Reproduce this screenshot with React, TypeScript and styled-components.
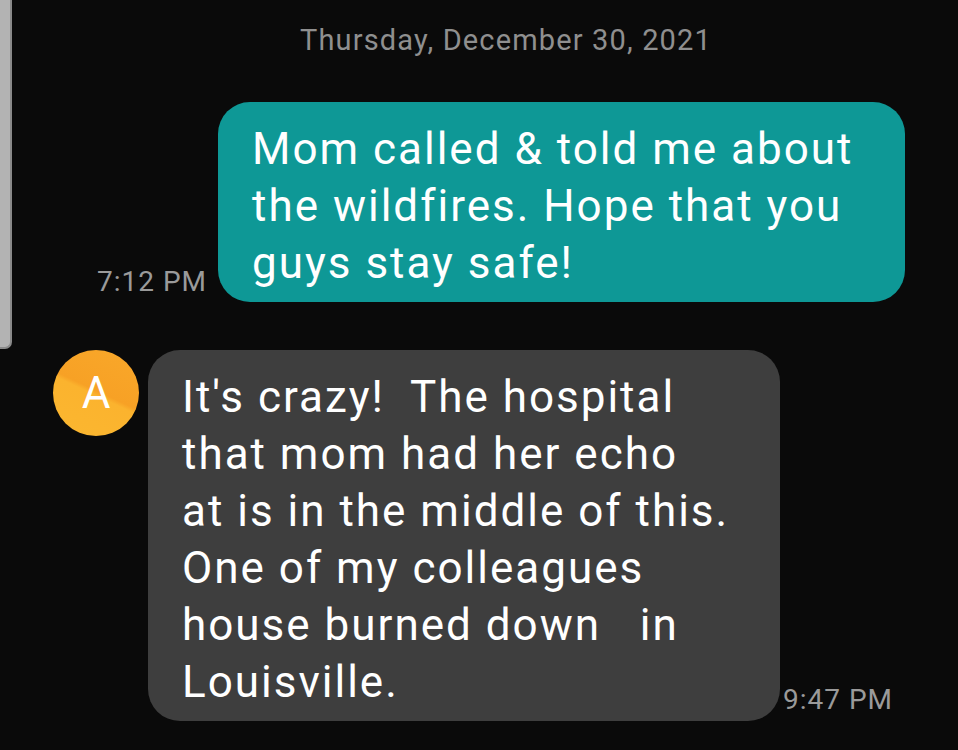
import styled, { createGlobalStyle } from "styled-components";

const GlobalStyle = createGlobalStyle`
  html, body {
    margin: 0;
    padding: 0;
    background: #0a0a0a;
  }
  * {
    box-sizing: border-box;
  }
`;

const App = () => {
  return (
    <Screen>
      <GlobalStyle />
      <ScrollThumb />
      <DateHeader>Thursday, December 30, 2021</DateHeader>

      <OutgoingRow>
        <Time $gap={11} $bottom={6}>
          7:12 PM
        </Time>
        <Bubble $color="#0e9896" $width={687}>
          Mom called &amp; told me about
          <br />
          the wildfires. Hope that you
          <br />
          guys stay safe!
        </Bubble>
      </OutgoingRow>

      <IncomingRow>
        <Avatar>A</Avatar>
        <Bubble $color="#3e3e3e" $width={632}>
          {"It's crazy!  The hospital"}
          <br />
          that mom had her echo
          <br />
          at is in the middle of this.
          <br />
          One of my colleagues
          <br />
          {"house burned down   in"}
          <br />
          Louisville.
        </Bubble>
        <Time $gap={3} $bottom={7}>
          9:47 PM
        </Time>
      </IncomingRow>
    </Screen>
  );
};

export default App;

const Screen = styled.div`
  position: relative;
  display: flex;
  flex-direction: column;

  width: 958px;
  height: 750px;
  overflow: hidden;

  background: #0a0a0a;
  font-family: Roboto, "Liberation Sans", sans-serif;
`;

const ScrollThumb = styled.div`
  position: absolute;
  top: 0;
  left: 0;

  width: 12px;
  height: 349px;

  background: #b3b3b3;
  border-right: 2px solid #8a8a8a;
  border-bottom: 2px solid #8a8a8a;
  border-bottom-right-radius: 7px;
`;

const DateHeader = styled.div`
  padding: 22px 0 0 54px;

  color: #8f8f8f;
  font-size: 29px;
  line-height: 36px;
  letter-spacing: 1.15px;
  text-align: center;
`;

const OutgoingRow = styled.div`
  display: flex;
  justify-content: flex-end;
  align-items: flex-end;

  margin-top: 44px;
  padding-right: 53px;
`;

const IncomingRow = styled.div`
  display: flex;
  align-items: flex-end;

  margin-top: 48px;
  padding-left: 53px;
`;

const Bubble = styled.div<{ $color: string; $width: number }>`
  flex-shrink: 0;
  width: ${({ $width }) => $width}px;
  padding: 19px 20px 10px 34px;

  background: ${({ $color }) => $color};
  border-radius: 32px;

  color: #ffffff;
  font-size: 44px;
  line-height: 57px;
  letter-spacing: 2px;
  white-space: pre-wrap;
`;

const Time = styled.span<{ $gap: number; $bottom: number }>`
  margin: 0 ${({ $gap }) => $gap}px ${({ $bottom }) => $bottom}px;

  color: #9a9a9a;
  font-size: 28px;
  line-height: 28px;
  letter-spacing: 1px;
  white-space: nowrap;
`;

const Avatar = styled.div`
  display: flex;
  justify-content: center;
  align-items: center;
  align-self: flex-start;
  flex-shrink: 0;

  width: 86px;
  height: 86px;
  margin: 0 9px 0 0;

  border-radius: 50%;
  background: linear-gradient(
    205deg,
    #f9a82a 0%,
    #f7a125 48%,
    #fbb32e 52%,
    #fbb730 100%
  );

  color: #ffffff;
  font-size: 44px;
  line-height: 1;
`;
